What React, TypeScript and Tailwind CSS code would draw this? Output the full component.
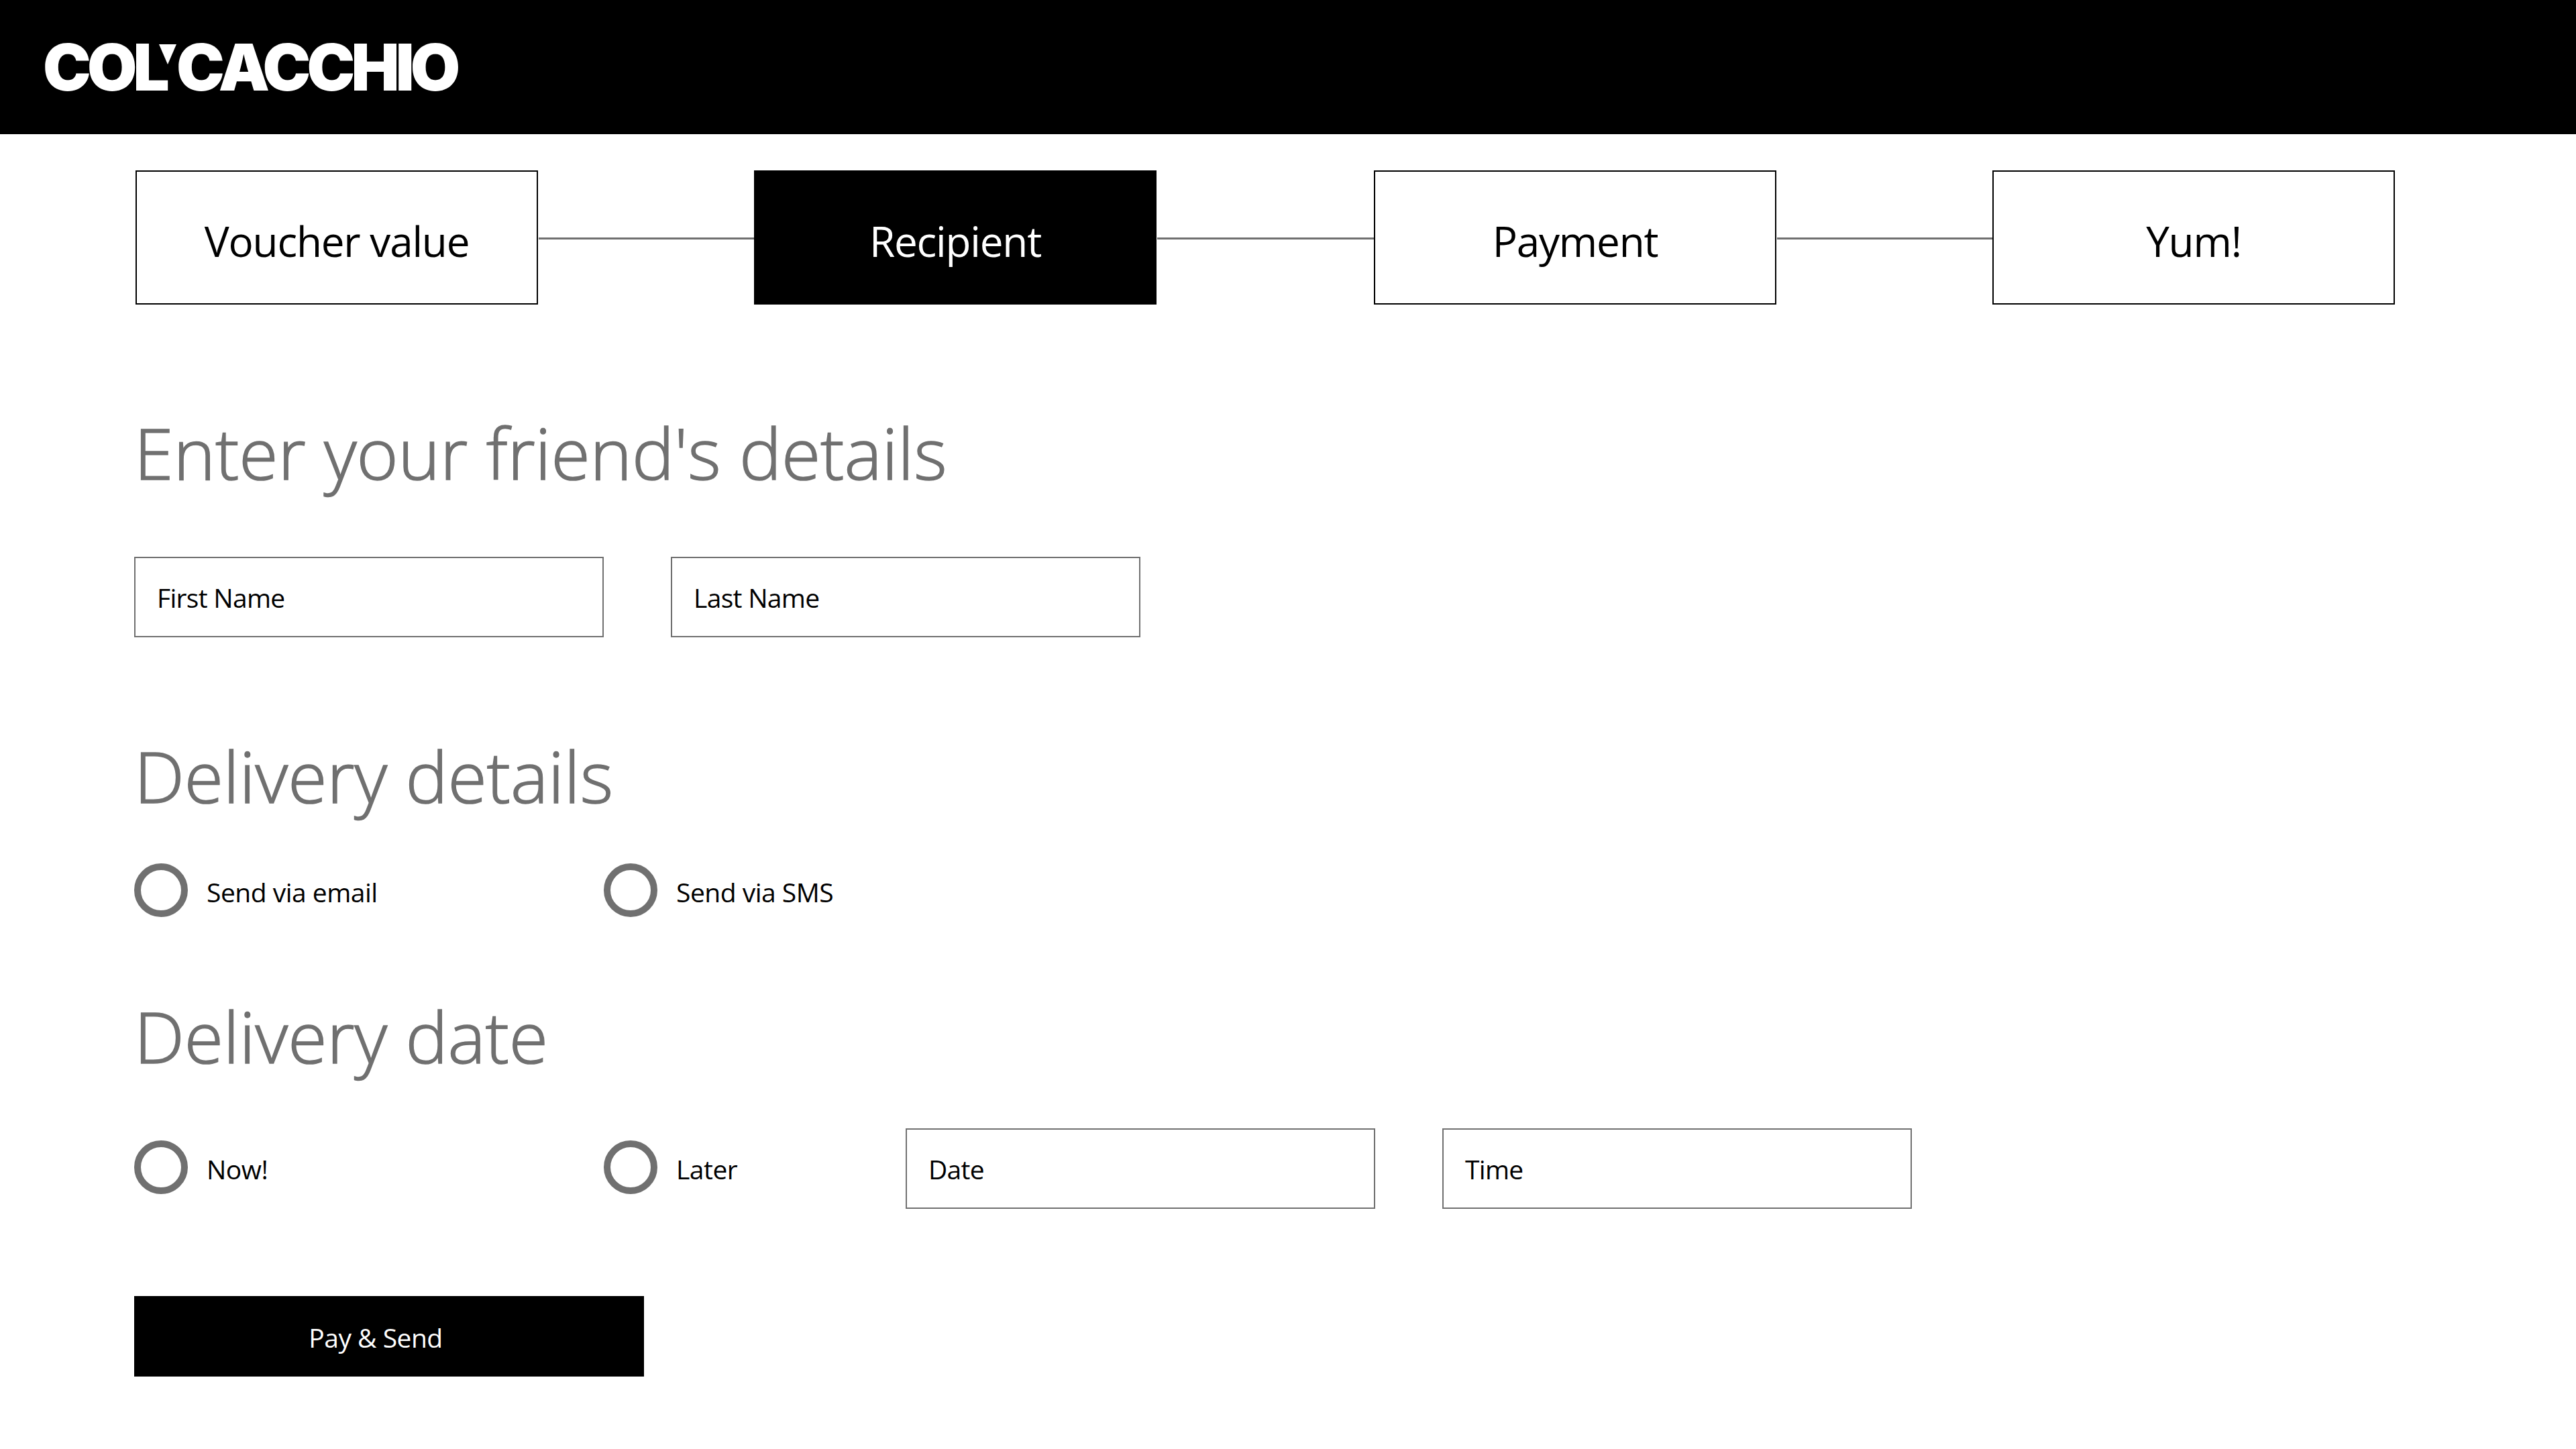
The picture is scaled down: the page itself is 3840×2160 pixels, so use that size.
const font = { fontFamily: '"Open Sans", "Noto Sans", sans-serif' };

function Step({ label, active }: { label: string; active?: boolean }) {
  return (
    <div className={`flex h-[200px] w-[600px] shrink-0 items-center justify-center border-2 border-black text-[62px] font-normal tracking-[-1.2px] ${active ? "bg-black text-white" : "bg-white text-black"}`}>
      <span className="relative top-[5px]">{label}</span>
    </div>
  );
}

function Line({ className = "" }: { className?: string }) {
  return <div className={`ml-px mt-[2px] h-[3px] shrink-0 bg-[#707070] ${className}`} />;
}

function Field({ label, className = "" }: { label: string; className?: string }) {
  return (
    <div className={`flex h-[120px] w-[700px] shrink-0 items-center border-[2.5px] border-[#707070] bg-white pl-[32px] pt-[2px] text-[39px] tracking-[-0.7px] text-black ${className}`}>
      <span className="font-normal">{label}</span>
    </div>
  );
}

function Radio({ label, className = "" }: { label: string; className?: string }) {
  return (
    <div className={`flex h-[80px] items-center ${className}`}>
      <div className="h-[80px] w-[80px] shrink-0 rounded-full border-[10px] border-[#707070]" />
      <span className="ml-[28px] pt-[7px] text-[39px] font-normal tracking-[-0.5px] text-black">{label}</span>
    </div>
  );
}

function Heading({ children, className = "" }: { children: string; className?: string }) {
  return <h2 className={`text-[106px] leading-[140px] font-light tracking-[-0.1px] text-[#707070] [-webkit-text-stroke:1.5px_#707070] ${className}`}>{children}</h2>;
}

function Logo() {
  return (
    <div className="flex items-center pl-[64px] text-[96px] leading-none font-black tracking-[-5.8px] text-white" style={{ fontFamily: "Inter, sans-serif" }}>
      <span>COL</span>
      <svg width="26" height="40" viewBox="0 0 26 40" className="-ml-[10px] -mt-[28px] shrink-0">
        <polygon points="0,0 26,0 13,30" fill="#fff" />
      </svg>
      <span>CACCHIO</span>
    </div>
  );
}

export default function App() {
  return (
    <div className="min-h-[2160px] w-[3840px] bg-white" style={font}>
      <header className="flex h-[200px] items-center bg-black">
        <Logo />
      </header>
      <main className="pl-[200px]">
        <div className="mt-[54px] flex items-center pl-[2px]">
          <Step label="Voucher value" />
          <Line className="w-[321px]" />
          <Step label="Recipient" active />
          <Line className="w-[323px]" />
          <Step label="Payment" />
          <Line className="w-[321px]" />
          <Step label="Yum!" />
        </div>
        <Heading className="mt-[150px]">Enter your friend's details</Heading>
        <div className="mt-[86px] flex gap-[100px]">
          <Field label="First Name" />
          <Field label="Last Name" />
        </div>
        <Heading className="mt-[136px]">Delivery details</Heading>
        <div className="mt-[61px] flex">
          <Radio label="Send via email" className="w-[700px]" />
          <Radio label="Send via SMS" />
        </div>
        <Heading className="mt-[107px]">Delivery date</Heading>
        <div className="mt-[68px] flex items-start">
          <Radio label="Now!" className="mt-[18px] w-[700px]" />
          <Radio label="Later" className="mt-[18px] w-[450px]" />
          <Field label="Date" />
          <Field label="Time" className="ml-[100px]" />
        </div>
        <button className="mt-[130px] flex h-[120px] w-[760px] items-center justify-center bg-black pr-[40px] pt-[5px] text-[39px] font-normal tracking-[-0.5px] text-white">
          Pay &amp; Send
        </button>
      </main>
    </div>
  );
}
